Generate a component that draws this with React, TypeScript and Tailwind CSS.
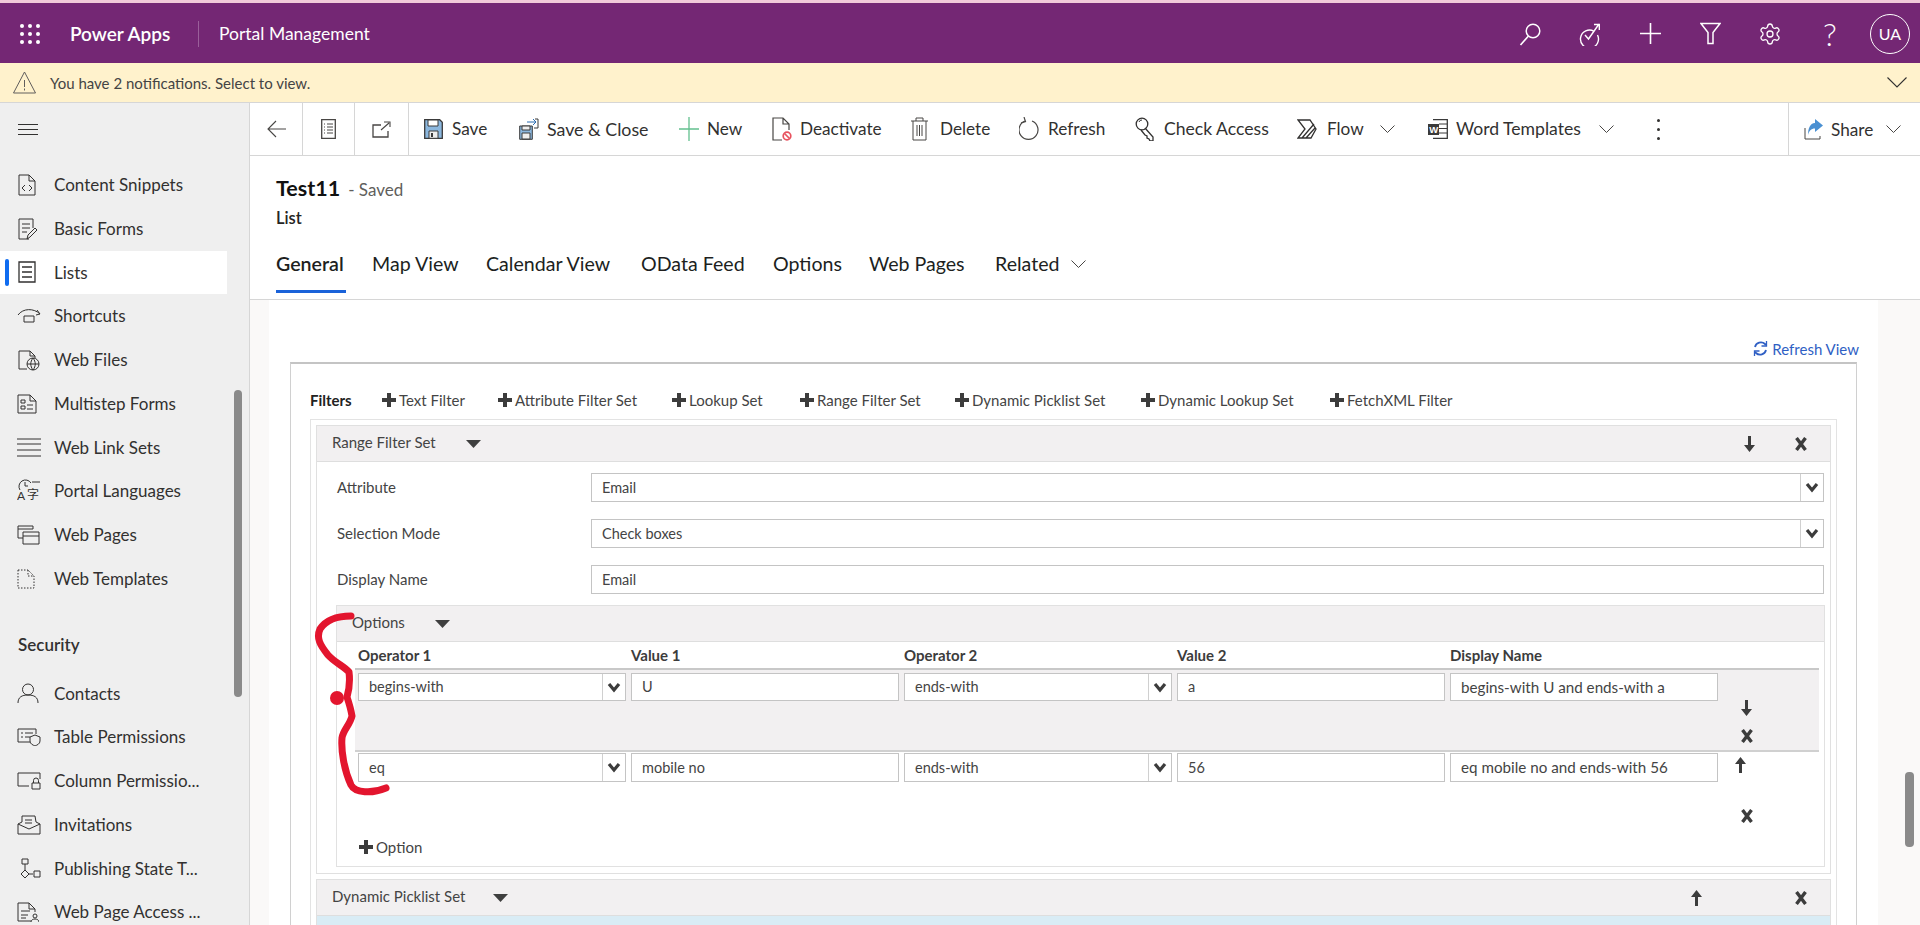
import React from "react";
import { Settings } from "lucide-react";

type P = { w: number; h: number; c?: string; children: React.ReactNode };
const S = ({ w, h, c = "text-[#323130]", children }: P) => (
  <svg width={w} height={h} viewBox={`0 0 ${w} ${h}`} fill="none" stroke="currentColor" strokeWidth={1} className={`shrink-0 ${c}`}>
    {children}
  </svg>
);

const Grid = () => (
  <S w={20} h={20} c="text-white">
    {[2, 10, 18].map((y) => [2, 10, 18].map((x) => <circle key={`${x}${y}`} cx={x} cy={y} r={2} fill="currentColor" stroke="none" />))}
  </S>
);

const Caret = () => (
  <svg width={15} height={8} viewBox="0 0 15 8" className="shrink-0 text-[#3f3f3f]"><path d="M0 0h15l-7.500 8z" fill="currentColor" /></svg>
);
const Plus = () => (
  <svg width={14} height={14} viewBox="0 0 14 14" className="shrink-0 text-[#3c3c3c]"><path d="M5 0h4v5h5v4H9v5H5V9H0V5h5z" fill="currentColor" /></svg>
);
const Cross = () => (
  <svg width={12} height={14} viewBox="0 0 12 14" className="shrink-0 text-[#3c3c3c]"><path d="M1.500 1l9 12M10.500 1l-9 12" stroke="currentColor" strokeWidth={3.400} fill="none" /></svg>
);
const ArrDown = () => (
  <svg width={11} height={16} viewBox="0 0 11 16" className="shrink-0 text-[#3c3c3c]"><path d="M4 0h3v9h4l-5.500 7L0 9h4z" fill="currentColor" /></svg>
);
const ArrUp = () => (
  <svg width={11} height={16} viewBox="0 0 11 16" className="shrink-0 text-[#3c3c3c]"><path d="M4 16h3V7h4L5.500 0 0 7h4z" fill="currentColor" /></svg>
);
const Vee = () => (
  <svg width={14} height={11} viewBox="0 0 14 11" className="shrink-0 text-[#3c3c3c]"><path d="M2 2l5 6 5-6" stroke="currentColor" strokeWidth={3.200} fill="none" /></svg>
);
const Chev = ({ s = 15 }: { s?: number }) => (
  <svg width={s} height={8} viewBox="0 0 15 8" className="shrink-0 text-[#484644]"><path d="M0.500 0.500l7 7 7-7" stroke="currentColor" fill="none" /></svg>
);

const topIcons = [
  <S w={22} h={24} c="text-white" key="a"><circle cx={14} cy={9} r={6.800} strokeWidth={1.500} /><path d="M9.500 14L1.500 23" strokeWidth={1.600} /></S>,
  <S w={22} h={24} c="text-white" key="b"><path d="M15 6.300A9 9 0 1 0 18.500 10" strokeWidth={1.400} transform="translate(0 3)" /><path d="M6 13l3.500 4L20 2M15 2.500h5.300V8" strokeWidth={1.400} /></S>,
  <S w={21} h={21} c="text-white" key="c"><path d="M10.500 0v21M0 10.500h21" strokeWidth={1.600} /></S>,
  <S w={21} h={23} c="text-white" key="d"><path d="M1 1.500h19l-7 9v11H8v-11z" strokeWidth={1.500} /></S>,
  <Settings key="e" size={24} strokeWidth={1.300} className="text-white shrink-0" />,
];

const sideIcons: Record<string, React.ReactNode> = {
  snippet: <S w={20} h={24}><path d="M2 2h10l6 6v14H2zM12 2v6h6" /><path d="M8 12l-3 3 3 3M12 12l3 3-3 3" /></S>,
  forms: <S w={20} h={24}><path d="M12 22H2V2h14v9M5 7h8M5 11h8M5 15h5" /><path d="M10 22l1-4 7-7 2 2-7 7z" /></S>,
  lists: <S w={20} h={22}><path d="M2 1h16v20H2z" strokeWidth={1.300} /><path d="M5 6h10M5 11h10M5 16h10" strokeWidth={1.300} /></S>,
  shortcuts: <S w={24} h={16}><path d="M1 7C6 0 17 0 23 6M7 8h10v6H7z" /><path d="M20 2l3 4-4 1" /></S>,
  files: <S w={24} h={22}><path d="M2 20V2h11l5 5v2M13 2v5h5M2 20h8" /><circle cx={16} cy={15} r={6} /><path d="M10 15h12M16 9c-3 4-3 8 0 12M16 9c3 4 3 8 0 12" /></S>,
  multi: <S w={20} h={20}><path d="M1 1h12l6 6v12H1zM13 1v6h6M4 6h4v3H4zM4 12h4v3H4zM10 11h6M10 15h6" /></S>,
  sets: <S w={24} h={19}><path d="M0 1h24M0 6h24M0 12h24M0 18h24" /></S>,
  lang: (
    <svg width={24} height={24} viewBox="0 0 24 24" className="shrink-0 text-[#323130]">
      <path d="M3 11A6.500 6.500 0 1 1 14 4M8 3v4h3M15 3h8" stroke="currentColor" fill="none" />
      <text x={0} y={21} fontSize={12} fill="currentColor" fontFamily="Lato, sans-serif">A</text>
      <text x={10} y={20} fontSize={12} fill="currentColor" fontFamily="Noto Sans CJK SC, sans-serif">字</text>
    </svg>
  ),
  pages: <S w={23} h={20}><path d="M1 1h15v3M1 1v12h5M1 4h15" /><path d="M6 7h16v12H6zM6 11h16" /></S>,
  templates: <S w={18} h={20}><path d="M1 1h10l6 6v12H1zM11 1v6h6" strokeDasharray="1.500 1.500" /></S>,
  contacts: <S w={22} h={20}><circle cx={11} cy={6.500} r={5.500} /><path d="M1 20c0-6 4-8 10-8s10 2 10 8" /></S>,
  table: <S w={24} h={18}><path d="M13 14H1V1h18v5M4 5h2M8 5h8M4 9h2M8 9h5" /><path d="M13 9l5-2 5 2v4c0 3-3 4-5 5-2-1-5-2-5-5z" /></S>,
  column: <S w={24} h={18}><path d="M12 14H1V1h22v6" /><path d="M15 11h8v6h-8zM16.500 11V8.500a2.500 2.500 0 0 1 5 0V11" /></S>,
  invite: <S w={24} h={20}><path d="M1 9l4-2V1h13l1 6 4 2v10H1zM1 9l11 5 11-5M8 5h7M8 8h7" /></S>,
  publish: <S w={24} h={20}><path d="M5 1h6v5H5zM8 6v6M8 12l4 4-4 4-4-4zM12 16h4M17 13h6v6h-6z" /></S>,
  access: <S w={22} h={20}><path d="M14 19H1V1h11l6 6v3M12 1v6h6M4 9h9M4 13h7M4 16h5" /><circle cx={18} cy={14} r={2} /><path d="M14 20c0-2 2-3 4-3s4 1 4 3" /></S>,
};

const Item = ({ icon, label, active }: { icon: string; label: string; active?: boolean }) => (
  <div className={`h-[43.75px] flex items-center whitespace-nowrap text-[17px] text-[#323130] ${active ? "bg-white" : ""}`}>
    <div className={`w-[4px] h-[27px] ml-[5px] mr-[8px] rounded-sm ${active ? "bg-[#0f6cf0]" : ""}`} />
    <div className="w-[37px] flex items-center">{sideIcons[icon]}</div>
    {label}
  </div>
);

const Sidebar = () => (
  <aside className="w-[250px] shrink-0 bg-[#efefef] border-r border-[#d6d6d6] flex overflow-hidden">
    <div className="w-[227px] shrink-0">
      <div className="h-[60px] pl-[18px] pt-[21px]">
        <S w={20} h={11}><path d="M0 .5h20M0 5.500h20M0 10.500h20" strokeWidth={1.200} /></S>
      </div>
      <Item icon="snippet" label="Content Snippets" />
      <Item icon="forms" label="Basic Forms" />
      <Item icon="lists" label="Lists" active />
      <Item icon="shortcuts" label="Shortcuts" />
      <Item icon="files" label="Web Files" />
      <Item icon="multi" label="Multistep Forms" />
      <Item icon="sets" label="Web Link Sets" />
      <Item icon="lang" label="Portal Languages" />
      <Item icon="pages" label="Web Pages" />
      <Item icon="templates" label="Web Templates" />
      <div className="h-[71px] pt-[18px] pl-[18px] flex items-center text-[17px] font-semibold text-[#323130]">Security</div>
      <Item icon="contacts" label="Contacts" />
      <Item icon="table" label="Table Permissions" />
      <Item icon="column" label="Column Permissio..." />
      <Item icon="invite" label="Invitations" />
      <Item icon="publish" label="Publishing State T..." />
      <Item icon="access" label="Web Page Access ..." />
    </div>
    <div className="ml-[7px] mt-[287px] w-[8px] h-[307px] rounded bg-[#8a8a8a] shrink-0" />
  </aside>
);

const Cmd = ({ icon, label, w, chev, pad = "mr-[30px]", gap = "w-[29px]" }: { icon: React.ReactNode; label: string; w: string; chev?: boolean; pad?: string; gap?: string }) => (
  <div className={`flex items-center whitespace-nowrap text-[#323130] ${pad}`}>
    <div className={`flex items-center shrink-0 ${gap}`}>{icon}</div>
    <span className={w}>{label}</span>
    {chev && <span className="ml-[18px]"><Chev /></span>}
  </div>
);

const Floppy = () => (
  <svg width={19} height={20} viewBox="0 0 19 20" className="shrink-0">
    <path d="M.7.7h15l2.600 2.600v16H.7z" fill="#8bb7de" stroke="#3a3a3a" strokeWidth={1.300} />
    <path d="M4 1h10v6H4z" fill="#fff" stroke="#3a3a3a" />
    <path d="M5 12h9v7.300H5z" fill="#eee" stroke="#3a3a3a" />
    <path d="M7 14h2v4H7z" fill="#3a3a3a" />
  </svg>
);

const Toolbar = () => (
  <div className="h-[53px] shrink-0 border-b border-[#d6d6d6] flex items-stretch bg-white">
    <div className="w-[53px] border-r border-[#d6d6d6] flex items-center justify-center">
      <S w={19} h={18} c="text-[#484644]"><path d="M19 9H1M9 1L1 9l8 8" strokeWidth={1.100} /></S>
    </div>
    <div className="w-[52px] border-r border-[#d6d6d6] flex items-center justify-center">
      <S w={15} h={20} c="text-[#484644]"><path d="M.7.7h13.600v18.600H.7z" strokeWidth={1.300} /><path d="M3 5h1M6 5h6M3 8h1M6 8h6M3 11h1M6 11h6M3 14h1M6 14h6" /></S>
    </div>
    <div className="w-[54px] border-r border-[#d6d6d6] flex items-center justify-center">
      <S w={19} h={17} c="text-[#484644]"><path d="M9 4H1v12h15v-6" strokeWidth={1.300} /><path d="M9 9l8-7M12 1h6v5" strokeWidth={1.100} /></S>
    </div>
    <div className="flex items-center pl-[15px] flex-1 min-w-0">
      <Cmd icon={<Floppy />} label="Save" w="w-[37px] text-[17.2px]" gap="w-[28px]" />
      <Cmd icon={
        <svg width={20} height={22} viewBox="0 0 20 22" className="shrink-0">
          <path d="M.7 8h12.600v13.300H.7z" fill="#8bb7de" stroke="#3a3a3a" />
          <path d="M3 8h8v4H3zM3 15h8v6H3z" fill="#eee" stroke="#3a3a3a" />
          <path d="M8 4h9M14 1l3 3-3 3" stroke="#2b6cb0" fill="none" />
          <path d="M16 1h3v9h-4" stroke="#3a3a3a" fill="none" />
        </svg>} label="Save & Close" w="w-[102px] text-[17.8px]" gap="w-[28px]" />
      <Cmd icon={<S w={20} h={24} c="text-[#63c08f]"><path d="M10 0v24M0 12h20" strokeWidth={1.300} /></S>} label="New" w="w-[35px] text-[17.2px]" gap="w-[28px]" />
      <Cmd icon={
        <svg width={20} height={24} viewBox="0 0 20 24" className="shrink-0">
          <path d="M10 23H1V1h10l6 6v6M11 1v6h6" stroke="#484644" fill="none" strokeWidth={1.200} />
          <circle cx={15} cy={19} r={3.800} stroke="#e8535f" strokeWidth={1.700} fill="#fff" />
          <path d="M12.500 16.500l5 5" stroke="#e8535f" strokeWidth={1.700} />
        </svg>} label="Deactivate" w="w-[81px] text-[17.2px]" gap="w-[28px]" />
      <Cmd icon={<S w={17} h={24} c="text-[#484644]"><path d="M0 4h17M5 4V1h7v3M2 4v19h13V4M6 8v11M8.500 8v11M11 8v11" /></S>} label="Delete" w="w-[49px] text-[17.2px]" gap="w-[29px]" />
      <Cmd icon={<S w={20} h={24} c="text-[#484644]"><path d="M6 4a9.500 9.500 0 1 0 7 0" strokeWidth={1.200} /><path d="M5 0l1.500 4.500L2 6" strokeWidth={1.200} /></S>} label="Refresh" w="w-[57px] text-[17.2px]" />
      <Cmd icon={<S w={20} h={24} c="text-[#323130]"><circle cx={7} cy={7} r={5.800} strokeWidth={1.300} /><path d="M10 11l8 9v4h-3l-1-2-2-1v-2l-2-1-4-5" strokeWidth={1.300} /><path d="M4 5a3 3 0 0 1 3-2" /></S>} label="Check Access" w="w-[103px] text-[17.6px]" gap="w-[29px]" />
      <Cmd icon={<S w={20} h={20} c="text-[#323130]"><path d="M1 1h12l6 9-5 9H1l7-9zM5 19L17 5M9 19l9-10" strokeWidth={1.300} /></S>} label="Flow" w="w-[35px] text-[17.2px]" chev pad="mr-[33px]" gap="w-[30px]" />
      <Cmd icon={
        <svg width={20} height={20} viewBox="0 0 20 20" className="shrink-0">
          <path d="M5 .7h14.300v18.600H5" stroke="#3a3a3a" fill="#fff" strokeWidth={1.300} />
          <path d="M11 5h8M11 9.500h8M11 14h8" stroke="#3a3a3a" />
          <rect x={0} y={5} width={11} height={11} fill="#3a3a3a" />
          <text x={1.200} y={14.200} fontSize={9.500} fontWeight={700} fill="#fff" fontFamily="Liberation Sans, sans-serif">W</text>
        </svg>} label="Word Templates" w="w-[125px] text-[17.6px]" chev pad="mr-[0px]" gap="w-[28px]" />
      <div className="ml-[43px] flex flex-col gap-[6px] items-center">
        <span className="w-[3px] h-[3px] rounded-full bg-[#323130]" />
        <span className="w-[3px] h-[3px] rounded-full bg-[#323130]" />
        <span className="w-[3px] h-[3px] rounded-full bg-[#323130]" />
      </div>
    </div>
    <div className="w-[132px] shrink-0 border-l border-[#d6d6d6] flex items-center pl-[15px] text-[17.2px] text-[#323130]">
      <svg width={20} height={21} viewBox="0 0 20 21" className="shrink-0">
        <path d="M1 9v11h15v-3" stroke="#484644" fill="none" />
        <path d="M11 0l8 6.500-8 6.500V9.500C7 9.500 5 12 4 16 4 10 6 4 11 4z" fill="#4a90d2" />
      </svg>
      <span className="ml-[7px] w-[48px] mt-[2px]">Share</span>
      <span className="ml-[7px]"><Chev /></span>
    </div>
  </div>
);

const Tab = ({ w, label, active, chev }: { w: string; label: string; active?: boolean; chev?: boolean }) => (
  <div className={`${w} h-[48px] flex flex-col`}>
    <div className="h-[45px] pb-[8px] flex items-center text-[19.6px] whitespace-nowrap text-[#201f1e]">
      <span className={active ? "font-semibold" : ""}>{label}</span>
      {chev && <span className="ml-[11px]"><Chev /></span>}
    </div>
    {active && <div className="h-[3px] w-[70px] bg-[#1a62d9]" />}
  </div>
);

const RecordHeader = () => (
  <div className="h-[144px] shrink-0 border-b border-[#d6d6d6] pl-[26px] bg-white">
    <div className="h-[34px] mt-[16px] flex items-baseline">
      <span className="text-[21.5px] font-bold text-[#111]">Test11</span>
      <span className="text-[17px] text-[#605e5c] ml-[8px]">- Saved</span>
    </div>
    <div className="h-[22px] mt-[1px] text-[16.5px] leading-[22px] font-semibold text-[#252423]">List</div>
    <div className="flex mt-[16px]">
      <Tab w="w-[96px]" label="General" active />
      <Tab w="w-[114px]" label="Map View" />
      <Tab w="w-[155px]" label="Calendar View" />
      <Tab w="w-[132px]" label="OData Feed" />
      <Tab w="w-[96px]" label="Options" />
      <Tab w="w-[126px]" label="Web Pages" />
      <Tab w="w-[120px]" label="Related" chev />
    </div>
  </div>
);

const AddBtn = ({ w, label }: { w: string; label: string }) => (
  <div className={`${w} flex items-center gap-[3px] whitespace-nowrap text-[#444] text-[15px] shrink-0`}>
    <Plus />
    {label}
  </div>
);

const Input = ({ v, select, cls = "" }: { v: string; select?: boolean; cls?: string }) => (
  <div className={`flex border border-[#c4c4c4] bg-white text-[#444] ${cls}`}>
    <div className="flex-1 px-[10px] flex items-center whitespace-nowrap">{v}</div>
    {select && (
      <div className="w-[23px] border-l border-[#d0d0d0] flex items-center justify-center"><Vee /></div>
    )}
  </div>
);

const FormRow = ({ label, v, select, cls }: { label: string; v: string; select?: boolean; cls: string }) => (
  <div className={`flex items-center ml-[20px] mr-[6px] ${cls}`}>
    <div className="w-[254px] text-[15px] text-[#444]">{label}</div>
    <Input v={v} select={select} cls="flex-1 h-[29px] text-[14.5px]" />
  </div>
);

const PanelHead = ({ label, gap, right, h }: { label: string; gap: string; right?: React.ReactNode; h: string }) => (
  <div className={`${h} bg-[#f2f0f1] border-b border-[#dedede] flex items-center text-[15px] text-[#444] whitespace-nowrap`}>
    <span className={`${gap} pb-[2px]`}>{label}</span>
    <Caret />
    {right}
  </div>
);

const Th = ({ t }: { t: string }) => <div className="text-[15px] font-bold text-[#3c3c3c] whitespace-nowrap">{t}</div>;

const Filters = () => (
  <div className="border border-[#e3e3e3] ml-[19px] mr-[19px] p-[5px] pb-0">
    <div className="border border-[#e0e0e0]">
      <PanelHead
        h="h-[36px] pl-[15px]"
        label="Range Filter Set"
        gap="w-[134px]"
        right={
          <div className="ml-auto flex items-center mr-[23px]">
            <ArrDown />
            <span className="w-[40px]" />
            <Cross />
          </div>
        }
      />
      <FormRow cls="mt-[11px]" label="Attribute" v="Email" select />
      <FormRow cls="mt-[17px]" label="Selection Mode" v="Check boxes" select />
      <FormRow cls="mt-[17px]" label="Display Name" v="Email" />
      <div className="border border-[#e1e1e1] ml-[19px] mr-[5px] mt-[11px] mb-[6px]">
        <PanelHead h="h-[36px] pl-[15px]" label="Options" gap="w-[83px]" />
        <div className="ml-[18px] mr-[5px]">
          <div className="h-[26px] grid grid-cols-[268px_268px_268px_268px_268px_1fr] gap-x-[5px] pl-[3px] items-center">
            <Th t="Operator 1" />
            <Th t="Value 1" />
            <Th t="Operator 2" />
            <Th t="Value 2" />
            <Th t="Display Name" />
          </div>
          <div className="h-[2px] bg-[#c8c8c8]" />
          <div className="h-[82px] bg-[#f2f0f1] border-b-2 border-[#d0d0d0] pt-[3px] pl-[3px] grid grid-cols-[268px_268px_268px_268px_268px_1fr] gap-x-[5px] items-start">
            <Input v="begins-with" select cls="h-[28px] text-[14.5px]" />
            <Input v="U" cls="h-[28px] text-[14.5px]" />
            <Input v="ends-with" select cls="h-[28px] text-[14.5px]" />
            <Input v="a" cls="h-[28px] text-[14.5px]" />
            <Input v="begins-with U and ends-with a" cls="h-[28px] text-[15.2px]" />
            <div className="flex flex-col pl-[18px] pt-[27px] gap-[13px]">
              <ArrDown />
              <Cross />
            </div>
          </div>
          <div className="h-[80px] pt-[1px] pl-[3px] grid grid-cols-[268px_268px_268px_268px_268px_1fr] gap-x-[5px] items-start">
            <Input v="eq" select cls="h-[29px] text-[14.5px]" />
            <Input v="mobile no" cls="h-[29px] text-[14.5px]" />
            <Input v="ends-with" select cls="h-[29px] text-[14.5px]" />
            <Input v="56" cls="h-[29px] text-[14.5px]" />
            <Input v="eq mobile no and ends-with 56" cls="h-[29px] text-[15.2px]" />
            <div className="flex flex-col pl-[12px] pt-[4px]">
              <ArrUp />
              <div className="mt-[36px] pl-[6px]"><Cross /></div>
            </div>
          </div>
          <div className="h-[34px] pl-[4px] flex items-start pt-[4px]">
            <AddBtn w="w-[100px]" label="Option" />
          </div>
        </div>
      </div>
    </div>
    <div className="border border-[#e0e0e0] mt-[5px]">
      <PanelHead
        h="h-[36px] pl-[15px]"
        label="Dynamic Picklist Set"
        gap="w-[161px]"
        right={
          <div className="ml-auto flex items-center mr-[23px]">
            <ArrUp />
            <span className="w-[93px]" />
            <Cross />
          </div>
        }
      />
      <div className="h-[40px] bg-[#d9ecf5]" />
    </div>
  </div>
);

const Content = () => (
  <div className="flex-1 flex bg-[#faf9f8] min-h-0 overflow-hidden">
    <div className="ml-[19px] w-[1609px] bg-white px-[21px] shrink-0">
      <div className="h-[62px] flex items-end justify-end pb-[2px] -mr-[2px]">
        <div className="flex items-center gap-[4px] text-[#2f5fc4] text-[15px] whitespace-nowrap">
          <svg width={15} height={17} viewBox="0 0 15 17" fill="none" stroke="currentColor" strokeWidth={1.800}>
            <path d="M2 7a6 6 0 0 1 10-3l1 1M13 10a6 6 0 0 1-10 3l-1-1" />
            <path d="M13.500 1v5h-5M1.500 16v-5h5" strokeWidth={1.300} />
          </svg>
          Refresh View
        </div>
      </div>
      <div className="border-t-2 border-x border-[#d0d0d0] border-t-[#c4c4c4] h-[600px]">
        <div className="flex items-center h-[24px] mt-[24px] mb-[7px] pl-[19px]">
          <div className="w-[72px] font-bold text-[15px] text-[#222] shrink-0">Filters</div>
          <AddBtn w="w-[116px]" label="Text Filter" />
          <AddBtn w="w-[174px]" label="Attribute Filter Set" />
          <AddBtn w="w-[128px]" label="Lookup Set" />
          <AddBtn w="w-[155px]" label="Range Filter Set" />
          <AddBtn w="w-[186px]" label="Dynamic Picklist Set" />
          <AddBtn w="w-[189px]" label="Dynamic Lookup Set" />
          <AddBtn w="w-[130px]" label="FetchXML Filter" />
        </div>
        <Filters />
      </div>
    </div>
    <div className="flex-1 flex justify-end pr-[6px]">
      <div className="mt-[472px] w-[9px] h-[75px] rounded bg-[#8a8a8a]" />
    </div>
  </div>
);

export default function App() {
  return (
    <div className="relative w-[1920px] h-[925px] overflow-hidden flex flex-col bg-white font-[Lato,'Noto_Sans',sans-serif]">
      <div className="h-[3px] shrink-0 bg-[#f1c9d9]" />
      <header className="h-[60px] shrink-0 bg-[#742774] flex items-center text-white pt-[1px]">
        <div className="ml-[20px] w-[50px] flex items-center"><Grid /></div>
        <div className="w-[128px] text-[19px] font-semibold whitespace-nowrap pt-[2px]">Power Apps</div>
        <div className="w-px h-[26px] bg-[#9a5f9a]" />
        <div className="ml-[20px] text-[17.5px] whitespace-nowrap pt-[2px]">Portal Management</div>
        <div className="ml-auto flex items-center">
          <div className="w-[60px] flex justify-center">{topIcons[0]}</div>
          <div className="w-[60px] flex justify-center">{topIcons[1]}</div>
          <div className="w-[60px] flex justify-center">{topIcons[2]}</div>
          <div className="w-[60px] flex justify-center">{topIcons[3]}</div>
          <div className="w-[60px] flex justify-center">{topIcons[4]}</div>
          <div className="w-[60px] flex justify-center text-[32px] leading-[32px] font-light">?</div>
          <div className="ml-[10px] mr-[10px] w-[40px] h-[40px] rounded-full border border-white flex items-center justify-center text-[16px]">UA</div>
        </div>
      </header>
      <div className="h-[40px] shrink-0 bg-[#fff2cc] border-b border-[#d6d6d6] flex items-center text-[15px] text-[#444]">
        <svg width={23} height={23} viewBox="0 0 23 23" fill="none" className="ml-[13px] mr-[14px] text-[#605e5c]" stroke="currentColor" strokeWidth={1}>
          <path d="M11.500 1L22.500 22H.5zM11.500 9v7M11.500 17.500v2" />
        </svg>
        <span className="pt-[1px]">You have 2 notifications. Select to view.</span>
        <span className="ml-auto mr-[13px]">
          <svg width={20} height={11} viewBox="0 0 20 11" fill="none" stroke="#323130" strokeWidth={1.100}><path d="M.5.5l9.500 9.500L19.500.5" /></svg>
        </span>
      </div>
      <div className="flex-1 flex min-h-0">
        <Sidebar />
        <main className="flex-1 min-w-0 flex flex-col">
          <Toolbar />
          <RecordHeader />
          <Content />
        </main>
      </div>
      <svg width={80} height={190} viewBox="310 610 80 190" fill="none" className="absolute left-[310px] top-[610px] pointer-events-none">
        <path
          d="M351 616C338 616 326 620 320 629C316 638 320 645 328 655C334 662 345 667 349 672C350 680 349 690 347 697C349 703 351 710 352 716C350 725 343 730 342 738C341 750 344 770 351 785C355 793 372 794 386 788"
          stroke="#e3152e"
          strokeWidth={7}
          strokeLinecap="round"
          strokeLinejoin="round"
        />
        <circle cx={337} cy={698} r={7} fill="#e3152e" />
      </svg>
    </div>
  );
}
